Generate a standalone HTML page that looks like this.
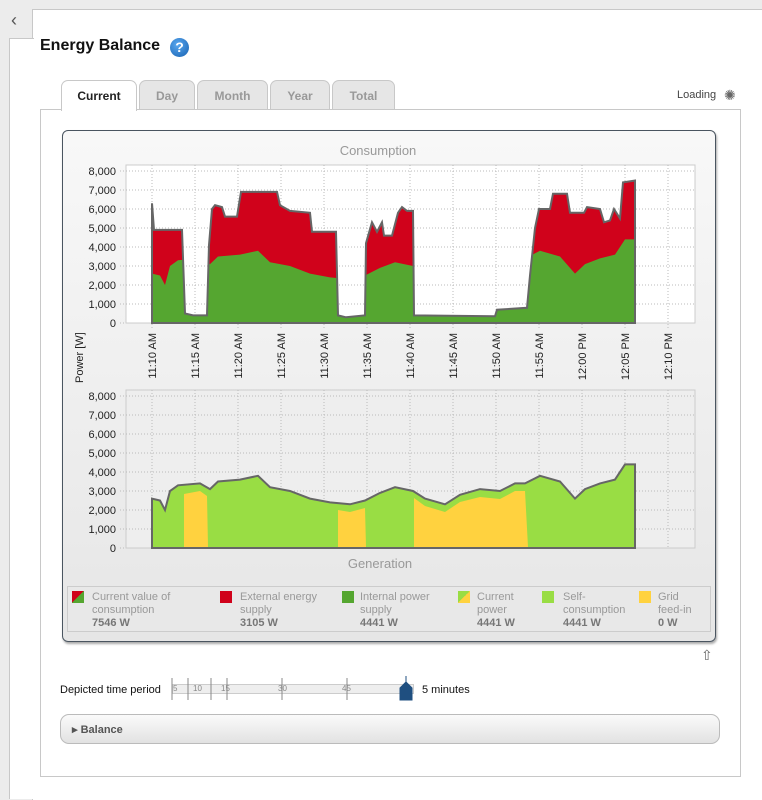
<!DOCTYPE html>
<html><head><meta charset="utf-8"><style>
body{margin:0;width:762px;height:790px;background:#ececec;font-family:"Liberation Sans",sans-serif;position:relative;overflow:hidden}
.abs{position:absolute}
.tab{position:absolute;top:80px;height:29px;border:1px solid #c8c8c8;border-bottom:none;border-radius:7px 7px 0 0;background:#e6e6e6;color:#999;font-weight:bold;font-size:12px;text-align:center;line-height:30px;box-sizing:border-box}
.lg{position:absolute;top:591px;font-size:11px;color:#999;line-height:13px}
.lg b{color:#777}
.sw{position:absolute;top:591px;width:12px;height:12px}
</style></head><body>
<div class="abs" style="left:32px;top:9px;width:730px;height:790px;background:#fff;border-left:1px solid #c8c8c8;border-top:1px solid #c8c8c8"></div>
<div class="abs" style="left:9px;top:38px;width:24px;height:760px;background:#fff;border-left:1px solid #c8c8c8;border-top:1px solid #c8c8c8"></div>
<div class="abs" style="left:11px;top:10px;font-size:18px;color:#555">‹</div>
<div class="abs" style="left:40px;top:37px;font-size:16px;font-weight:bold;color:#111">Energy Balance</div>
<div class="abs" style="left:170px;top:38px;width:19px;height:19px;border-radius:50%;background:radial-gradient(circle at 40% 35%,#5aa8f0,#1560b0);color:#fff;font-weight:bold;font-size:14px;text-align:center;line-height:19px">?</div>
<div class="abs" style="left:40px;top:109px;width:699px;height:666px;border:1px solid #c8c8c8;background:#fff"></div>
<div class="tab" style="left:61px;width:76px;background:#fff;color:#222;height:31px;z-index:2">Current</div>
<div class="tab" style="left:139px;width:56px">Day</div>
<div class="tab" style="left:197px;width:71px">Month</div>
<div class="tab" style="left:270px;width:60px">Year</div>
<div class="tab" style="left:332px;width:63px">Total</div>
<div class="abs" style="left:677px;top:89px;font-size:11px;color:#444">Loading</div>
<div class="abs" style="left:724px;top:87px;font-size:14px;color:#666">✺</div>
<div class="abs" style="left:62px;top:130px;width:652px;height:510px;border:1px solid #4a5560;border-radius:6px;background:linear-gradient(#f8f8f8,#e6e6e6);box-shadow:1px 2px 2px #aaa"></div>
<svg class="abs" style="left:0;top:0" width="762" height="790" font-family="Liberation Sans,sans-serif">
<defs><clipPath id="c"><polygon id="tp" points="152,323 152,203.3 154,229.9 182,229.9 185,313.5 193,315.4 207,315.4 209,245.1 212,209 215,205.2 222,207.1 225,216.6 237,216.6 241,191.9 277,191.9 280,205.2 290,210.9 310,212.8 312,231.8 336,231.8 338,315.4 346,317.3 365,315.4 366,243.2 372,222.3 377,231.8 382,222.3 384,235.6 392,235.6 398,212.8 402,207.1 407,210.9 413,210.9 414,315.4 495,316.3 497,309.7 527,307.8 530,275.5 535,228 539,209 550,209 553,193.8 567,193.8 570,212.8 584,212.8 587,207.1 600,209 604,222.3 610,220.4 614,209 620,218.5 623,182.4 635,180.5 635,323"/></clipPath></defs>
<text x="378" y="155" font-size="13" fill="#999" text-anchor="middle">Consumption</text>
<text x="380" y="568" font-size="13" fill="#999" text-anchor="middle">Generation</text>
<rect x="126" y="165" width="569" height="158" fill="#fff" stroke="#ccc"/>
<rect x="126" y="390" width="569" height="158" fill="#eee" stroke="#ccc"/>
<g stroke="#bbb" stroke-dasharray="1,2" fill="none">
<path d="M120 171H695M120 190H695M120 209H695M120 228H695M120 247H695M120 266H695M120 285H695M120 304H695M120 323H126"/>
<path d="M120 396H695M120 415H695M120 434H695M120 453H695M120 472H695M120 491H695M120 510H695M120 529H695M120 548H126"/>
<path d="M152 165V330M195 165V330M238 165V330M281 165V330M324 165V330M367 165V330M410 165V330M453 165V330M496 165V330M539 165V330M582 165V330M625 165V330M668 165V330"/>
<path d="M152 390V548M195 390V548M238 390V548M281 390V548M324 390V548M367 390V548M410 390V548M453 390V548M496 390V548M539 390V548M582 390V548M625 390V548M668 390V548"/>
</g>
<g font-size="11" fill="#222" text-anchor="end">
<text x="116" y="175">8,000</text><text x="116" y="194">7,000</text><text x="116" y="213">6,000</text><text x="116" y="232">5,000</text><text x="116" y="251">4,000</text><text x="116" y="270">3,000</text><text x="116" y="289">2,000</text><text x="116" y="308">1,000</text><text x="116" y="327">0</text>
<text x="116" y="400">8,000</text><text x="116" y="419">7,000</text><text x="116" y="438">6,000</text><text x="116" y="457">5,000</text><text x="116" y="476">4,000</text><text x="116" y="495">3,000</text><text x="116" y="514">2,000</text><text x="116" y="533">1,000</text><text x="116" y="552">0</text>
</g>
<g font-size="11" fill="#222" text-anchor="end">
<text transform="translate(156,333) rotate(-90)">11:10 AM</text><text transform="translate(199,333) rotate(-90)">11:15 AM</text><text transform="translate(242,333) rotate(-90)">11:20 AM</text><text transform="translate(285,333) rotate(-90)">11:25 AM</text><text transform="translate(328,333) rotate(-90)">11:30 AM</text><text transform="translate(371,333) rotate(-90)">11:35 AM</text><text transform="translate(414,333) rotate(-90)">11:40 AM</text><text transform="translate(457,333) rotate(-90)">11:45 AM</text><text transform="translate(500,333) rotate(-90)">11:50 AM</text><text transform="translate(543,333) rotate(-90)">11:55 AM</text><text transform="translate(586,333) rotate(-90)">12:00 PM</text><text transform="translate(629,333) rotate(-90)">12:05 PM</text><text transform="translate(672,333) rotate(-90)">12:10 PM</text>
<text transform="translate(83,383) rotate(-90)" text-anchor="start" x="0">Power [W]</text>
</g>
<use href="#tp" fill="#d0021b"/>
<polygon clip-path="url(#c)" fill="#55a630" points="152,323 152,273.6 160,275.5 165,285 170,266 178,260.3 200,258.4 210,264.1 218,256.5 240,254.6 258,250.8 270,262.2 290,266 310,273.6 330,277.4 350,279.3 365,275.5 380,267.9 395,262.2 413,266 425,273.6 445,279.3 460,269.8 480,264.1 500,266 515,258.4 525,258.4 540,250.8 560,256.5 575,273.6 585,264.1 600,258.4 615,254.6 625,239.4 635,239.4 635,323"/>
<use href="#tp" fill="none" stroke="#666" stroke-width="2"/>
<g transform="translate(0,225)">
<polygon fill="#99dd44" stroke="#666" stroke-width="2" points="152,323 152,273.6 160,275.5 165,285 170,266 178,260.3 200,258.4 210,264.1 218,256.5 240,254.6 258,250.8 270,262.2 290,266 310,273.6 330,277.4 350,279.3 365,275.5 380,267.9 395,262.2 413,266 425,273.6 445,279.3 460,269.8 480,264.1 500,266 515,258.4 525,258.4 540,250.8 560,256.5 575,273.6 585,264.1 600,258.4 615,254.6 625,239.4 635,239.4 635,323"/>
<polygon fill="#ffd23f" points="184,322 184,269 200,266 207,271 208,322"/>
<polygon fill="#ffd23f" points="338,322 338,285 350,287 365,283 366,322"/>
<polygon fill="#ffd23f" points="414,322 414,273 425,281 445,287 460,277 480,272 500,274 515,266 525,266 528,322"/>
</g>
</svg>
<div class="abs" style="left:67px;top:586px;width:642px;height:44px;border:1px solid #ccc;background:#e8e8e8"></div>
<div class="sw" style="left:72px;background:linear-gradient(135deg,#d0021b 50%,#55a630 50%)"></div>
<div class="lg" style="left:92px">Current value of<br>consumption<br><b>7546 W</b></div>
<div class="sw" style="left:220px;background:#d0021b"></div>
<div class="lg" style="left:240px">External energy<br>supply<br><b>3105 W</b></div>
<div class="sw" style="left:342px;background:#55a630"></div>
<div class="lg" style="left:360px">Internal power<br>supply<br><b>4441 W</b></div>
<div class="sw" style="left:458px;background:linear-gradient(135deg,#99dd44 50%,#ffd23f 50%)"></div>
<div class="lg" style="left:477px">Current<br>power<br><b>4441 W</b></div>
<div class="sw" style="left:542px;background:#99dd44"></div>
<div class="lg" style="left:563px">Self-<br>consumption<br><b>4441 W</b></div>
<div class="sw" style="left:639px;background:#ffd23f"></div>
<div class="lg" style="left:658px">Grid<br>feed-in<br><b>0 W</b></div>
<div class="abs" style="left:701px;top:647px;font-size:14px;color:#666">⇧</div>
<div class="abs" style="left:60px;top:684px;font-size:11px;color:#111">Depicted time period</div>
<div class="abs" style="left:172px;top:684px;width:240px;height:8px;border:1px solid #ccc;background:#eee"></div>
<svg class="abs" style="left:165px;top:676px" width="260" height="26" font-size="8" fill="#888" font-family="Liberation Sans,sans-serif">
<path d="M7 2V24M23 2V24M62 2V24M117 2V24M46 2V24" stroke="#888"/>
<text x="8" y="15">5</text><text x="28" y="15">10</text><text x="56" y="15">15</text><text x="113" y="15">30</text><text x="177" y="15">45</text>
<path d="M182 2V24" stroke="#888"/>
<path d="M241 0V6M241 6L247 12V24H235V12Z" fill="#1f4f80" stroke="#1f4f80"/>
</svg>
<div class="abs" style="left:422px;top:684px;font-size:11px;color:#111">5 minutes</div>
<div class="abs" style="left:60px;top:714px;width:658px;height:28px;border:1px solid #bbb;border-radius:9px;background:linear-gradient(#fafafa,#e2e2e2)"></div>
<div class="abs" style="left:72px;top:723px;font-size:11px;font-weight:bold;color:#555">▸ Balance</div>
</body></html>
